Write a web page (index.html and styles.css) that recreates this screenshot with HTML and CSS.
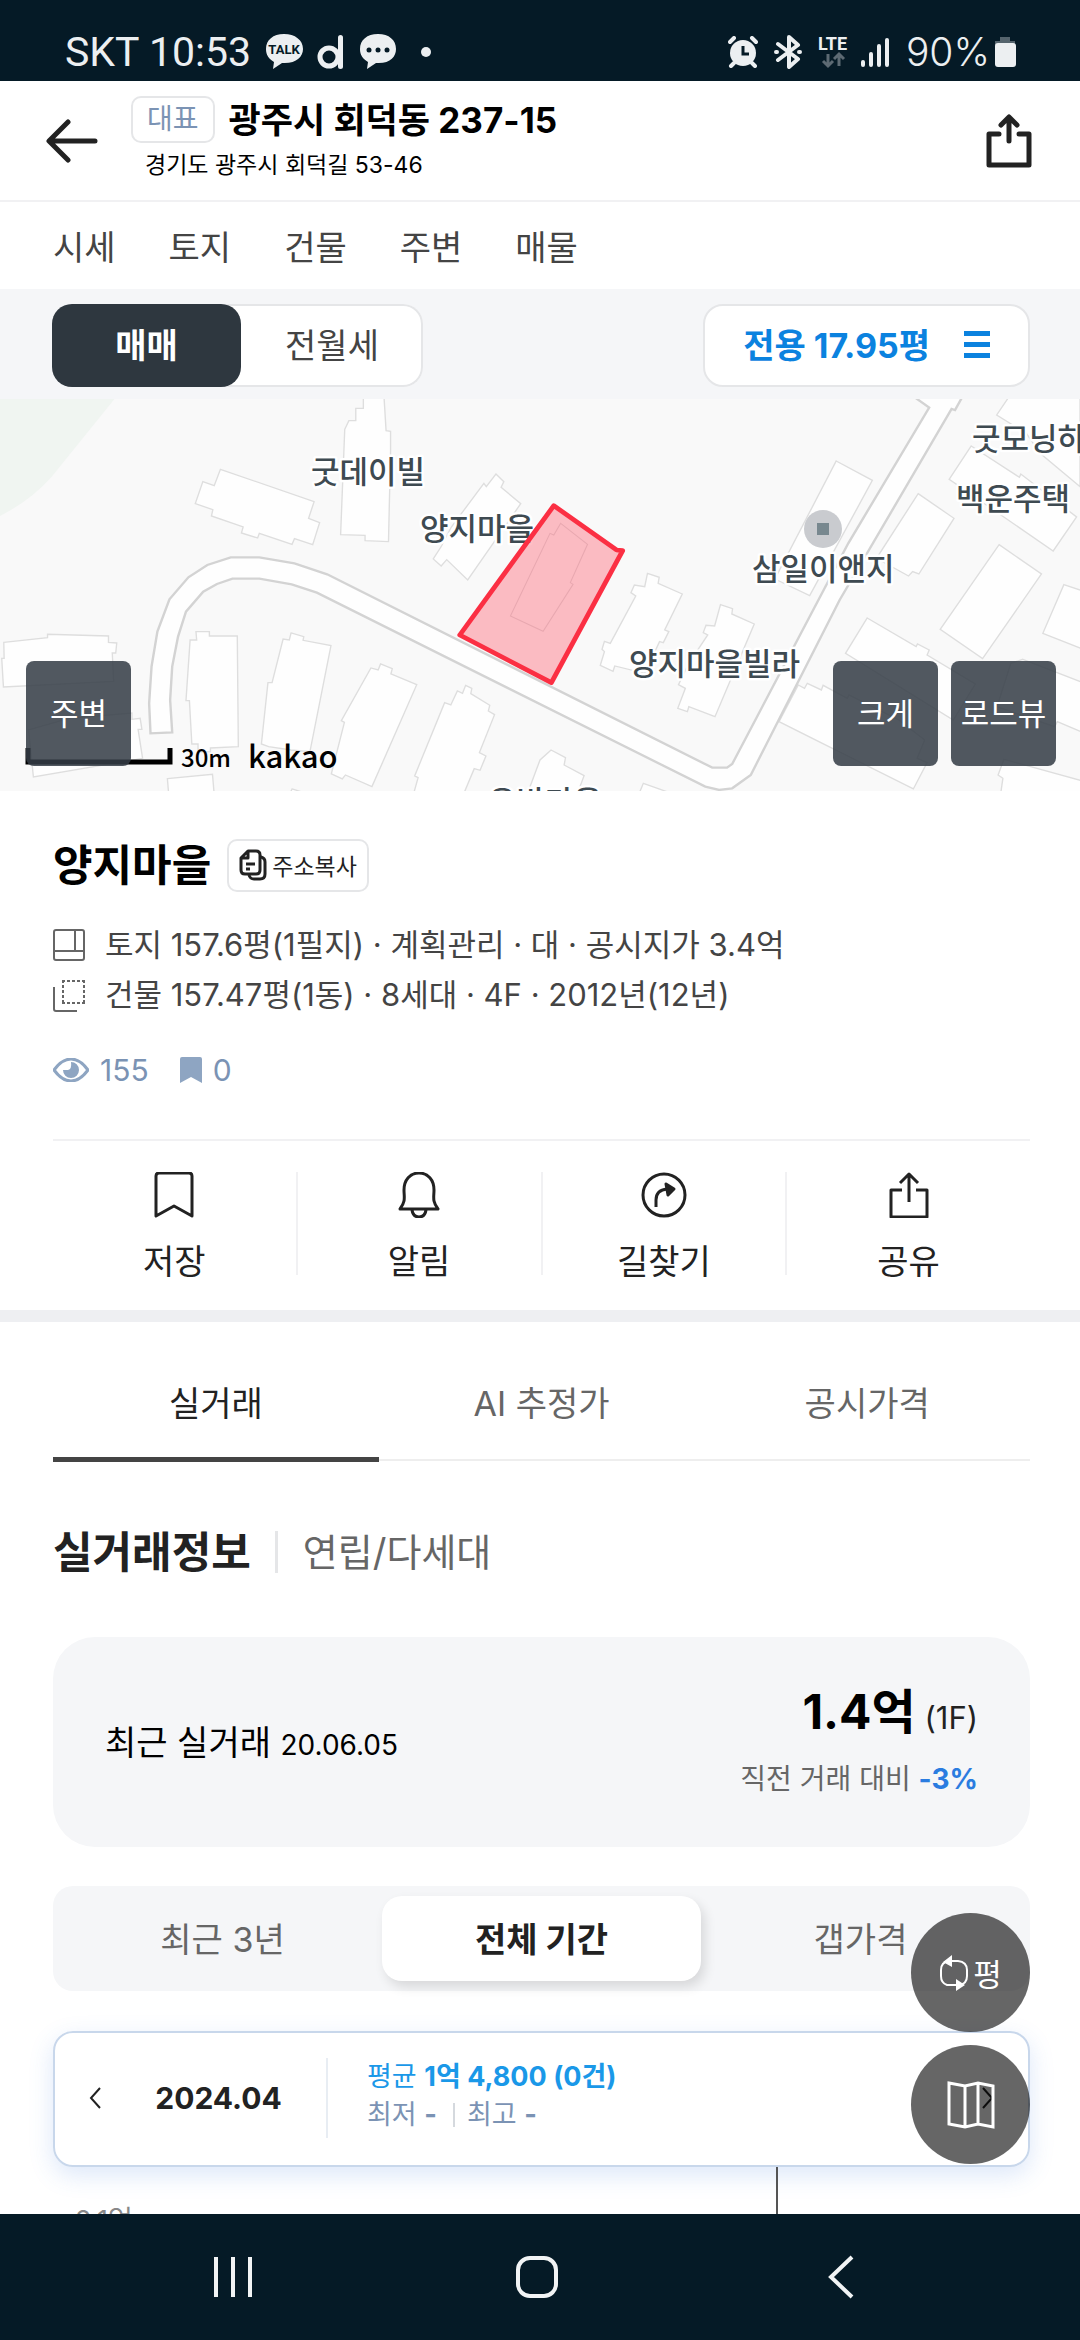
FILE: index.html
```html
<!DOCTYPE html>
<html lang="ko">

<head>
    <meta charset="UTF-8">
    <meta name="viewport" content="width=device-width, initial-scale=1.0">
    <title>광주시 회덕동 237-15</title>
    <link rel="stylesheet" href="styles.css">
</head>

<body>
    <!-- status bar -->
    <div class="status">
        <div class="status-left">
            <span class="clock">SKT 10:53</span>
            <svg width="38" height="36" viewBox="0 0 38 36">
                <path d="M19 0C8 0 1 6 1 15c0 6 3 10 8 13l-1 7 9-6c14 1 21-6 21-14C38 6 30 0 19 0z" fill="#eceff1" />
                <text x="19" y="20" class="talk">TALK</text>
            </svg>
            <svg width="28" height="34" viewBox="0 0 28 34">
                <circle cx="12" cy="22" r="9" fill="none" stroke="#eceff1" stroke-width="5" />
                <path d="M23.500 2.500v29" stroke="#eceff1" stroke-width="5" stroke-linecap="round" />
            </svg>
            <svg width="38" height="36" viewBox="0 0 38 36">
                <path d="M19 0C8 0 1 6 1 15c0 6 3 10 8 13l-1 7 9-6c14 1 20-6 20-14C37 6 30 0 19 0z" fill="#eceff1" />
                <g fill="#051a26"><circle cx="10" cy="16" r="2.500" /><circle cx="19" cy="16" r="2.500" /><circle cx="28" cy="16" r="2.500" /></g>
            </svg>
            <span class="more-dot"></span>
        </div>
        <div class="status-right">
            <svg width="30" height="32" viewBox="0 0 30 32">
                <circle cx="15" cy="17" r="13" fill="#eceff1" />
                <path d="M2 6l4-4M28 6l-4-4M6 27l-3 3M24 27l3 3" stroke="#eceff1" stroke-width="4" stroke-linecap="round" />
                <path d="M15 10v8h6" fill="none" stroke="#051a26" stroke-width="3" />
            </svg>
            <svg class="bt" width="28" height="34" viewBox="0 0 28 34" fill="none" stroke="#eceff1" stroke-width="4" stroke-linejoin="round" stroke-linecap="round">
                <path d="M4 9l20 15-9 8V2l9 8L4 25" />
                <path d="M2 17h1M25 17h1" />
            </svg>
            <svg class="lte" width="32" height="34" viewBox="0 0 32 34">
                <text x="0" y="15" class="lte-text">LTE</text>
                <path d="M10 19v11M5 26l5 5 5-5M21 31V20M16 24l5-5 5 5" fill="none" stroke="#5d6a73" stroke-width="3" />
            </svg>
            <svg class="bars" width="30" height="30" viewBox="0 0 30 30" stroke="#eceff1" stroke-width="4" stroke-linecap="round">
                <path d="M3 25v3M11 17v11M19 9v19M27 3v25" />
            </svg>
            <span class="clock">90%</span>
            <svg width="22" height="32" viewBox="0 0 22 32">
                <path d="M6 1h10v4h5v4H1V5h5z" fill="#55646d" />
                <rect x="1" y="7" width="21" height="24" rx="3" fill="#eceff1" />
            </svg>
        </div>
    </div>

    <!-- header -->
    <header class="header">
        <button class="icon-btn" aria-label="뒤로">
            <svg width="52" height="44" viewBox="0 0 52 44" fill="none" stroke="#222" stroke-width="5" stroke-linecap="round" stroke-linejoin="round">
                <path d="M49 22H4M22 3L3 22l19 19" />
            </svg>
        </button>
        <div class="address">
            <div class="address-main">
                <span class="badge">대표</span>
                <h1>광주시 회덕동 237-15</h1>
            </div>
            <p>경기도 광주시 회덕길 53-46</p>
        </div>
        <button class="icon-btn" aria-label="공유">
            <svg width="46" height="54" viewBox="0 0 46 54" fill="none" stroke="#222" stroke-width="5" stroke-linecap="round" stroke-linejoin="round">
                <path d="M13 20H3v31h40V20H33M23 27V4M15 11l8-8 8 8" />
            </svg>
        </button>
    </header>

    <nav class="menu">
        <a href="#">시세</a>
        <a href="#">토지</a>
        <a href="#">건물</a>
        <a href="#">주변</a>
        <a href="#">매물</a>
    </nav>

    <div class="filter">
        <div class="toggle">
            <button class="on">매매</button>
            <button>전월세</button>
        </div>
        <button class="area">
            전용 17.95평
            <svg width="26" height="28" viewBox="0 0 26 28" fill="#0b82df">
                <path d="M0 1h26v5H0zM0 12h26v5H0zM0 23h26v5H0z" />
            </svg>
        </button>
    </div>

    <main>
        <section class="map">
            <svg class="map-canvas" viewBox="0 0 1080 392" preserveAspectRatio="xMidYMid slice">
                <rect width="1080" height="392" fill="#f9f9f9" />
                <g transform="translate(0 -9) scale(.3444 .3333)">
                    <path d="M0 0H350L330 30 150 260Q90 330 0 378z" fill="#f0f5f1" />
                    <g class="building">
                        <path d="M640 238L912 335 896 385 928 398 908 464 855 446 848 463 753 430 748 444 701 429 706 411 614 378 618 359 567 341 589 275 622 287z" />
                        <path d="M1055 20V55H1033V92H1013L1001 118 989 434 1060 436V452L1128 455 1134 186V124L1121 122 1115 20z" />
                        <path d="M1440 252L1463 275 1455 292 1512 341 1358 570 1297 509 1281 528 1258 507 1282 468 1310 412 1405 280 1412 290z" />
                        <path d="M11 757L138 743V733L315 738V757L339 759 336 789H326L330 874 10 891 5 805H12z" />
                        <path d="M83 1020L200 985 383 969V988L407 985 412 1018H401L414 1105 97 1161z" />
                        <path d="M569 725H608V738H689L692 1070 611 1074V1085L575 1086V1062H557L550 932H540L552 750H571z" />
                        <path d="M845 729L882 740 880 751 961 767 900 1085 845 1080 780 1070 759 1062 778 878H790L822 747 840 750z" />
                        <path d="M1105 822L1139 836 1135 852 1210 884 1080 1190 1003 1155 994 1167 962 1152 1000 997 991 992 1077 834 1098 840z" />
                        <path d="M1352 886L1370 895 1367 911 1422 946 1418 963 1436 974 1392 1088 1411 1098 1394 1141 1377 1136 1345 1215H1200L1214 1163 1204 1158 1291 938 1309 945 1328 903 1343 910z" />
                        <path d="M486 1166L617 1153 622 1215H490z" />
                        <path d="M848 1197L905 1215H840z" />
                        <path d="M1530 1215L1568 1110 1600 1080 1642 1103 1638 1125 1696 1157 1675 1215z" />
                        <path d="M2428 213L2533 271 2351 617 2250 567z" />
                        <path d="M2666 311L2770 385 2668 552 2650 545 2638 558 2545 505z" />
                        <path d="M2930 20L2894 75 2980 130 3020 190 3136 290V20z" />
                        <path d="M2820 168L2960 262 2964 252 3126 381 3058 483 2756 268z" />
                        <path d="M2901 464L3024 552 2853 806 2730 718z" />
                        <path d="M3089 584L3150 605V780L3028 730z" />
                        <path d="M2518 684L2660 770 2664 762 2698 780 2692 795 2832 882 2768 990 2455 790z" />
                        <path d="M1880 550L1914 562 1911 580 1981 612 1930 720 1942 725 1926 758 1915 755 1872 850 1785 828 1780 844 1743 826 1755 785 1748 778 1755 754 1772 760 1846 618 1832 608 1842 585 1872 590z" />
                        <path d="M2092 644L2127 656 2125 672 2190 702 2076 980 2000 950 1996 965 1968 955 1990 895 1970 884 2000 820 2055 735 2042 728 2050 706 2075 708z" />
                        <path d="M2318 885L2336 895 2344 880 2385 900 2390 886 2460 925 2465 915 2610 990 2685 1050 2663 1105 2692 1118 2652 1197 2262 995z" />
                        <path d="M2970 808L3150 880V1030L3070 995 3062 1010 2895 950 2935 820z" />
                        <path d="M2915 1108L3150 1175V1215H2905L2912 1165 2898 1155z" />
                        <path d="M1868 1180L1990 1225H1850z" />
                    </g>
                    <path class="road" d="M437 1030L433 940 440 830 457 725 492 628 547 562 602 525 670 502H753L855 520 950 553 2068 1133H2111L2126 1122 2463 460 2698 53 2640 10H2800L2773 60 2763 57 2438 630 2180 1155 2126 1195 2088 1200 2048 1190 920 608 847 583 753 566H675L630 582 590 605 540 665 517 740 500 830 494 930 500 1027z" />
                </g>
                <circle cx="823" cy="130" r="19" fill="#c9cbcf" />
                <rect x="817" y="124" width="12" height="12" fill="#78888f" />
                <g class="map-label">
                    <text x="311" y="84">굿데이빌</text>
                    <text x="420" y="141">양지마을</text>
                    <text x="972" y="51">굿모닝하</text>
                    <text x="956" y="111">백운주택</text>
                    <text x="752" y="181">삼일이앤지</text>
                    <text x="629" y="276">양지마을빌라</text>
                    <text x="488" y="414">우방마을</text>
                </g>
                <g transform="translate(0 -9) scale(.3444 .3333)">
                    <path class="lot" d="M1608 347L1790 480 1808 482 1601 878 1335 735z" />
                    <path d="M1628 400L1706 463 1656 578 1664 583 1577 724 1482 678 1597 430 1608 435z" fill="none" stroke="#e8a8b0" stroke-width="3" />
                </g>
                <path d="M28 349v14h142v-14" fill="none" stroke="#000" stroke-width="5" />
                <text class="scale-text" x="181" y="368">30m</text>
                <text class="kakao" x="248" y="369">kakao</text>
            </svg>
            <div class="map-btns">
                <button>주변</button>
                <button class="push">크게</button>
                <button>로드뷰</button>
            </div>
        </section>

        <section class="info">
            <div class="name-row">
                <h2>양지마을</h2>
                <button class="copy">
                    <svg width="28" height="32" viewBox="0 0 28 32" fill="none" stroke="#222" stroke-width="3" stroke-linejoin="round">
                        <path d="M9 2h8q4 0 4 4v15q0 4-4 4H6q-4 0-4-4V9zM9 2v7H2" />
                        <path d="M21 8h1q4 1 4 5v12q0 5-5 5h-6q-4 0-5-4M7 15h9M7 20h4" />
                    </svg>
                    주소복사
                </button>
            </div>
            <ul class="spec">
                <li>
                    <svg width="32" height="32" viewBox="0 0 32 32" fill="none" stroke="#666" stroke-width="2">
                        <rect x="1" y="1" width="30" height="30" rx="2" />
                        <path d="M1 22h30M22 1v21" />
                    </svg>
                    토지 157.6평(1필지) · 계획관리 · 대 · 공시지가 3.4억
                </li>
                <li>
                    <svg width="32" height="34" viewBox="0 0 32 34" fill="none" stroke="#666" stroke-width="2">
                        <path d="M9 3h23M9 25h23M10 2v24M31 2v24" stroke-dasharray="3 2" />
                        <path d="M1 9v22q0 2 2 2h21" />
                    </svg>
                    건물 157.47평(1동) · 8세대 · 4F · 2012년(12년)
                </li>
            </ul>
            <div class="stats">
                <svg width="36" height="24" viewBox="0 0 36 24">
                    <path d="M1 12Q9 1 18 1t17 11Q27 23 18 23T1 12z" fill="none" stroke="#8ea5c2" stroke-width="3" />
                    <path d="M18 4a8 8 0 1 1-8 8h5q4-1 3-8z" fill="#8ea5c2" />
                </svg>
                <span>155</span>
                <svg class="mark" width="22" height="26" viewBox="0 0 22 26">
                    <path d="M0 2q0-2 2-2h18q2 0 2 2v24l-11-6-11 6z" fill="#8ea5c2" />
                </svg>
                <span>0</span>
            </div>

            <div class="actions">
                <button>
                    <svg width="46" height="46" viewBox="0 0 46 46">
                        <path d="M5 4q0-3 3-3h30q3 0 3 3v40L23 34 5 44z" />
                    </svg>
                    저장
                </button>
                <button>
                    <svg width="46" height="46" viewBox="0 0 46 46">
                        <path d="M4 37c6-8 4-12 4-19C8 8 14 1 23 1s15 7 15 17c0 7-2 11 4 19zM16 38q1 7 7 7t7-7" />
                    </svg>
                    알림
                </button>
                <button>
                    <svg width="46" height="46" viewBox="0 0 46 46">
                        <circle cx="23" cy="23" r="21" />
                        <path d="M15 35V28q0-10 11-11h3" />
                        <path d="M25 12l8 5-6 6z" fill="#222" />
                    </svg>
                    길찾기
                </button>
                <button>
                    <svg width="46" height="46" viewBox="0 0 46 46">
                        <path d="M16 18H5v27h36V18H30M23 30V2M14 11l9-9 9 9" />
                    </svg>
                    공유
                </button>
            </div>
        </section>

        <section class="deal">
            <div class="tabs">
                <button class="on">실거래</button>
                <button>AI 추정가</button>
                <button>공시가격</button>
            </div>

            <div class="deal-title">
                <h2>실거래정보</h2>
                <span>연립/다세대</span>
            </div>

            <div class="recent">
                <p class="recent-date">최근 실거래 <span>20.06.05</span></p>
                <div class="recent-price">
                    <p><strong>1.4억</strong> (1F)</p>
                    <p class="diff">직전 거래 대비 <b>-3%</b></p>
                </div>
            </div>

            <div class="period">
                <button>최근 3년</button>
                <button class="on">전체 기간</button>
                <button>갭가격</button>
            </div>

            <div class="month">
                <button class="arrow" aria-label="이전 달">
                    <svg width="12" height="22" viewBox="0 0 12 22"><path d="M11 1L2 11l9 10" /></svg>
                </button>
                <strong class="ym">2024.04</strong>
                <div class="avg">
                    <p class="avg-top">평균 <b>1억 4,800 (0건)</b></p>
                    <p class="avg-sub"><span>최저 <b>-</b></span><span>최고 <b>-</b></span></p>
                </div>
                <button class="arrow" aria-label="다음 달">
                    <svg width="12" height="22" viewBox="0 0 12 22"><path d="M1 1l9 10-9 10" /></svg>
                </button>
            </div>

            <div class="chart">
                <span class="axis">2.1억</span>
                <span class="cursor"></span>
            </div>
        </section>

        <div class="fabs">
            <button>
                <svg width="30" height="38" viewBox="0 0 30 38" fill="none" stroke="#fff" stroke-width="2">
                    <path d="M10 7Q2 8 2 16v6q0 7 6 9h9M13 7h6q9 1 9 9v6q0 8-8 9" />
                    <path d="M13 1v12L4 8zM17 37V25l9 6z" fill="#fff" stroke="none" />
                </svg>
                평
            </button>
            <button aria-label="지도">
                <svg width="48" height="48" viewBox="0 0 48 48" fill="none" stroke="#fff" stroke-width="3">
                    <path d="M2 2l16 3L31 2l15 3v41l-15-3-13 3-16-3zM18 5v41M31 2v41" />
                </svg>
            </button>
        </div>
    </main>

    <!-- system navigation -->
    <footer class="sysnav">
        <button aria-label="최근 앱">
            <svg width="42" height="44" viewBox="0 0 42 44"><path d="M4 2v40M21 2v40M38 2v40" /></svg>
        </button>
        <button aria-label="홈">
            <svg width="44" height="44" viewBox="0 0 44 44"><rect x="3" y="3" width="38" height="38" rx="12" /></svg>
        </button>
        <button aria-label="뒤로">
            <svg width="42" height="44" viewBox="0 0 42 44"><path d="M32 2L11 22l21 20" /></svg>
        </button>
    </footer>
</body>

</html>
```
FILE: styles.css
```css
* {
    padding: 0;
    margin: 0;
    box-sizing: border-box;
}

:root {
    --dark: #051a26;
    --text: #222;
    --gray: #666;
    --line: #e5e6e8;
    --bg: #f5f6f8;
    --blue: #0b82df;
    --slate: #7b93b4;
}

body {
    height: 100vh;
    display: flex;
    flex-direction: column;
    background: #fff;
    color: var(--text);
    font-family: Inter, "Noto Sans CJK KR", sans-serif;
    font-size: 34px;
}

button {
    border: 0;
    background: none;
    font: inherit;
    color: inherit;
    white-space: nowrap;
}

svg {
    display: block;
    flex: none;
}

ul {
    list-style: none;
}

a {
    color: inherit;
    text-decoration: none;
}

/* status bar */
.status {
    height: 81px;
    flex: none;
    padding: 22px 64px 0 65px;
    display: flex;
    justify-content: space-between;
    background: var(--dark);
    color: #eceff1;
    font-family: Roboto, sans-serif;
}

.status-left,
.status-right {
    display: flex;
    align-items: center;
    gap: 14px;
}

.clock {
    font-size: 41px;
    font-weight: 400;
}

.talk {
    font: 700 13px Roboto, sans-serif;
    fill: var(--dark);
    text-anchor: middle;
}

.more-dot {
    width: 10px;
    height: 10px;
    margin-left: 10px;
    border-radius: 50%;
    background: #eceff1;
}

.status-right {
    gap: 16px;
}

.status-right .clock {
    margin-right: -12px;
    font-family: Inter, sans-serif;
    font-size: 39px;
    font-weight: 300;
}

.lte {
    overflow: visible;
}

.lte-text {
    font: 700 18px Roboto, sans-serif;
    fill: #eceff1;
}

.bars {
    margin-left: -6px;
}

/* header */
.header {
    height: 121px;
    flex: none;
    padding: 0 48px 0 46px;
    display: flex;
    align-items: center;
    gap: 33px;
    border-bottom: 2px solid #f1f1f3;
}

.address {
    flex: 1;
}

.address-main {
    display: flex;
    align-items: center;
    gap: 14px;
    height: 48px;
}

.badge {
    height: 47px;
    padding: 0 14px;
    border: 2px solid var(--line);
    border-radius: 10px;
    color: var(--slate);
    font-size: 28px;
    line-height: 42px;
}

.address h1 {
    color: #000;
    font-size: 35px;
    font-weight: 700;
    line-height: 48px;
}

.address p {
    padding-left: 14px;
    color: #000;
    font-size: 23px;
    line-height: 42px;
}

/* section menu */
.menu {
    height: 87px;
    flex: none;
    padding-left: 53px;
    display: flex;
    align-items: center;
    gap: 53px;
    color: #444;
}

/* trade type and area */
.filter {
    flex: none;
    padding: 15px 50px 12px 52px;
    display: flex;
    justify-content: space-between;
    background: var(--bg);
}

.toggle {
    display: flex;
    border-radius: 20px;
    background: #fff;
    box-shadow: inset 0 0 0 2px var(--line);
}

.toggle button {
    height: 83px;
    width: 182px;
    padding-bottom: 4px;
    border-radius: 20px;
    color: #444;
}

.toggle .on {
    width: 189px;
    background: #2e373f;
    color: #fff;
    font-weight: 700;
}

.area {
    height: 83px;
    padding: 0 38px 4px;
    display: flex;
    align-items: center;
    gap: 34px;
    border: 2px solid var(--line);
    border-radius: 20px;
    background: #fff;
    color: var(--blue);
    font-weight: 700;
}

main {
    flex: 1;
    min-height: 0;
    position: relative;
    overflow: hidden;
}

/* map */
.map {
    position: relative;
    height: 392px;
}

.map-canvas {
    width: 100%;
    height: 100%;
}

.building {
    fill: #fefefe;
    stroke: #dedede;
    stroke-width: 4;
}

.road {
    fill: #fefefe;
    stroke: #d3d3d3;
    stroke-width: 7;
}

.lot {
    fill: rgba(255, 94, 112, .4);
    stroke: #fb2f43;
    stroke-width: 14;
    stroke-linejoin: round;
}

.map-label {
    font: 500 31px "Noto Sans CJK KR", sans-serif;
    fill: #3e4a51;
    stroke: #fff;
    stroke-width: 5;
    stroke-linejoin: round;
    paint-order: stroke;
}

.scale-text {
    font: 500 24px "Noto Sans CJK KR", sans-serif;
}

.kakao {
    font: 500 31px "Noto Sans CJK KR", sans-serif;
}

.map-btns {
    position: absolute;
    left: 26px;
    right: 24px;
    bottom: 25px;
    display: flex;
    gap: 13px;
}

.map-btns button {
    width: 105px;
    height: 105px;
    padding-bottom: 4px;
    border-radius: 8px;
    background: rgba(52, 60, 70, .86);
    color: #fff;
    font-size: 31px;
}

.map-btns .push {
    margin-left: auto;
}

/* building info */
.info {
    padding: 48px 50px 0 53px;
    border-bottom: 12px solid #eeeff2;
}

.name-row {
    display: flex;
    align-items: center;
    gap: 16px;
}

.name-row h2 {
    color: #000;
    font-size: 43px;
    font-weight: 700;
    line-height: 53px;
}

.copy {
    height: 53px;
    padding: 0 10px 2px;
    display: flex;
    align-items: center;
    gap: 5px;
    border: 2px solid var(--line);
    border-radius: 10px;
    font-size: 23px;
}

.spec {
    margin-top: 28px;
    color: #444;
    font-size: 31px;
    line-height: 50px;
}

.spec li {
    display: flex;
    align-items: center;
    gap: 20px;
}

.stats {
    margin-top: 30px;
    display: flex;
    align-items: center;
    gap: 11px;
    color: var(--slate);
    font-size: 30px;
    line-height: 40px;
}

.mark {
    margin-left: 20px;
}

.actions {
    margin-top: 49px;
    padding: 31px 0 35px;
    display: flex;
    border-top: 2px solid #f1f1f3;
}

.actions button {
    flex: 1;
    height: 103px;
    display: flex;
    flex-direction: column;
    align-items: center;
    justify-content: space-between;
    line-height: 26px;
}

.actions button + button {
    border-left: 2px solid #f1f1f3;
}

.actions svg {
    fill: none;
    stroke: #222;
    stroke-width: 3;
    stroke-linejoin: round;
}

/* real transaction */
.deal {
    padding: 0 50px 0 53px;
}

.tabs {
    height: 139px;
    display: flex;
    border-bottom: 2px solid #eee;
}

.tabs button {
    flex: 1;
    height: 140px;
    padding-top: 24px;
    border-bottom: 5px solid transparent;
    color: var(--gray);
}

.tabs .on {
    border-color: #444;
    color: var(--text);
}

.deal-title {
    margin-top: 61px;
    display: flex;
    align-items: center;
    gap: 24px;
    line-height: 60px;
}

.deal-title h2 {
    font-size: 43px;
    font-weight: 700;
}

.deal-title span {
    padding-left: 25px;
    border-left: 3px solid var(--line);
    color: var(--gray);
    font-size: 38px;
    line-height: 42px;
}

.recent {
    height: 210px;
    margin-top: 55px;
    padding: 0 52px 4px;
    display: flex;
    align-items: center;
    justify-content: space-between;
    border-radius: 42px;
    background: var(--bg);
}

.recent-date {
    color: #000;
}

.recent-date span {
    font-size: 28px;
}

.recent-price {
    text-align: right;
    font-size: 31px;
}

.recent-price p {
    line-height: 72px;
}

.recent-price strong {
    color: #000;
    font-size: 48px;
}

.recent-price .diff {
    color: var(--gray);
    font-size: 28px;
    line-height: 50px;
}

.diff b {
    color: #2a7ce0;
}

.period {
    height: 105px;
    margin-top: 39px;
    padding: 10px;
    display: flex;
    border-radius: 20px;
    background: var(--bg);
}

.period button {
    flex: 1;
    padding-bottom: 2px;
    border-radius: 20px;
    color: var(--gray);
}

.period .on {
    background: #fff;
    box-shadow: 4px 6px 12px rgba(0, 0, 0, .12);
    color: var(--text);
    font-weight: 700;
}

.month {
    height: 136px;
    margin-top: 40px;
    padding: 0 34px 2px;
    display: flex;
    align-items: center;
    border: 2px solid #c8d7eb;
    border-radius: 20px;
    box-shadow: 0 8px 24px rgba(60, 120, 220, .18);
}

.arrow svg {
    fill: none;
    stroke: #222;
    stroke-width: 2;
}

.ym {
    width: 225px;
    padding-left: 10px;
    text-align: center;
    font-size: 30px;
}

.avg {
    flex: 1;
    height: 80px;
    padding-left: 39px;
    border-left: 2px solid #e8edf3;
    font-size: 27px;
    line-height: 38px;
}

.avg-top {
    color: #1a98e8;
}

.avg-sub {
    display: flex;
    color: var(--slate);
}

.avg-sub span + span {
    margin-left: 16px;
    padding-left: 14px;
    background: linear-gradient(#d5d9de, #d5d9de) left / 2px 24px no-repeat;
}

.chart {
    padding: 32px 252px 0 22px;
    display: flex;
    justify-content: space-between;
    color: #888;
    font-size: 27px;
}

.cursor {
    width: 2px;
    height: 80px;
    margin-top: -32px;
    background: #555;
}

/* floating buttons */
.fabs {
    position: absolute;
    right: 50px;
    bottom: 50px;
    display: flex;
    flex-direction: column;
    gap: 13px;
}

.fabs button {
    width: 119px;
    height: 119px;
    display: flex;
    align-items: center;
    justify-content: center;
    gap: 4px;
    border-radius: 50%;
    background: rgba(0, 0, 0, .6);
    color: #fff;
    font-size: 31px;
}

/* system navigation */
.sysnav {
    height: 126px;
    flex: none;
    padding: 0 88px 0 82px;
    display: flex;
    align-items: center;
    justify-content: space-around;
    background: var(--dark);
}

.sysnav svg {
    fill: none;
    stroke: #f2f4f5;
    stroke-width: 4;
}
```
